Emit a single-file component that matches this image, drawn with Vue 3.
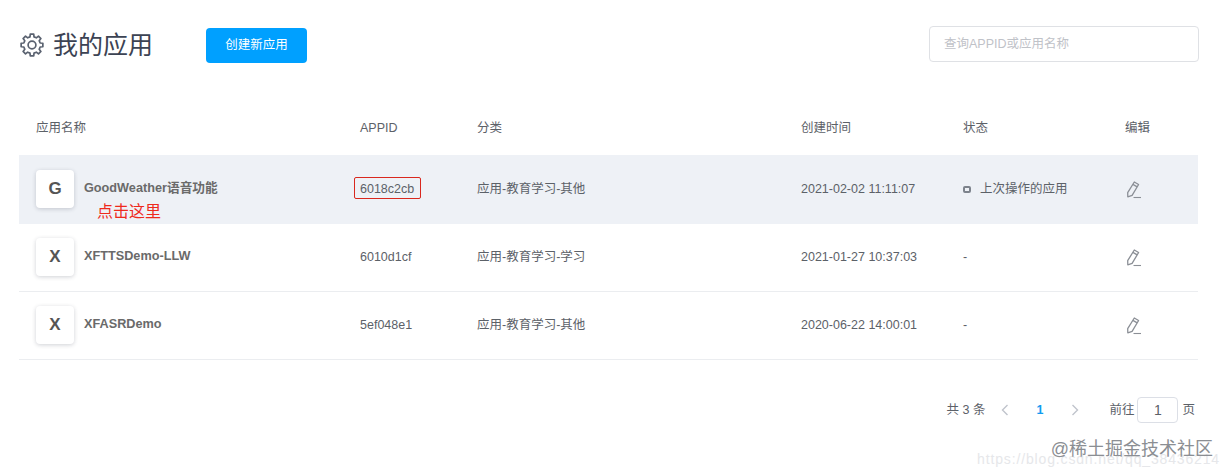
<template>
  <div class="page">
    <header class="head">
      <svg class="gear" viewBox="0 0 24 24" width="24" height="24" fill="none" stroke="#5a6270" stroke-width="1.700" stroke-linejoin="round">
        <path :d="gearPath" />
        <circle cx="12" cy="12" r="3.900" />
      </svg>
      <h1 class="title">我的应用</h1>
      <button class="create">创建新应用</button>
      <div class="search">查询APPID或应用名称</div>
    </header>

    <div class="table">
      <div class="row row-head">
        <div class="first">应用名称</div>
        <div>APPID</div>
        <div>分类</div>
        <div>创建时间</div>
        <div>状态</div>
        <div>编辑</div>
      </div>
      <div v-for="(app, i) in apps" :key="app.id" class="row row-body" :class="{ active: i === 0 }">
        <div class="first name-cell">
          <span class="avatar">{{ app.name[0] }}</span>
          <span class="name">{{ app.name }}</span>
          <span v-if="i === 0" class="note">点击这里</span>
        </div>
        <div class="id-cell">
          {{ app.id }}
          <span v-if="i === 0" class="mark"></span>
        </div>
        <div>{{ app.category }}</div>
        <div>{{ app.time }}</div>
        <div class="status">
          <i v-if="app.last" class="dot"></i>
          {{ app.last ? '上次操作的应用' : '-' }}
        </div>
        <div class="edit">
          <svg viewBox="0 0 18 18" width="18" height="18" fill="none" stroke="#8b8f96" stroke-width="1.300" stroke-linejoin="round">
            <path d="M9.300 1l4.300 2.500-6.500 10.900-4.300 1.500-.1-4.300z" />
            <path d="M7.900 3.400l4.300 2.500" />
            <path d="M8.500 16.500h7.500" stroke-width="1.100" />
          </svg>
        </div>
      </div>
    </div>

    <footer class="pager">
      <span>共 3 条</span>
      <svg class="arrow left" viewBox="0 0 8 12" width="8" height="12" fill="none" stroke="#c0c4cc" stroke-width="1.400"><path d="M6.500 1L1.500 6l5 5" /></svg>
      <b class="current">1</b>
      <svg class="arrow right" viewBox="0 0 8 12" width="8" height="12" fill="none" stroke="#c0c4cc" stroke-width="1.400"><path d="M1.500 1l5 5-5 5" /></svg>
      <span>前往</span>
      <span class="jump">1</span>
      <span>页</span>
    </footer>

    <div class="wm-url">https://blog.csdn.net/qq_38436214</div>
    <div class="wm-site">@稀土掘金技术社区</div>
  </div>
</template>

<script setup>
const apps = [
  { name: 'GoodWeather语音功能', id: '6018c2cb', category: '应用-教育学习-其他', time: '2021-02-02 11:11:07', last: true },
  { name: 'XFTTSDemo-LLW', id: '6010d1cf', category: '应用-教育学习-学习', time: '2021-01-27 10:37:03', last: false },
  { name: 'XFASRDemo', id: '5ef048e1', category: '应用-教育学习-其他', time: '2020-06-22 14:00:01', last: false }
]

// eight teeth round the centre of a 24 box
const point = (r, deg) => {
  const a = (deg - 90) * Math.PI / 180
  return `${(12 + r * Math.cos(a)).toFixed(2)} ${(12 + r * Math.sin(a)).toFixed(2)}`
}
const gearPath = Array.from({ length: 8 }, (_, i) => {
  const c = i * 45
  return `${i ? 'L' : 'M'}${point(8.4, c - 14)}L${point(11, c - 9)}L${point(11, c + 9)}L${point(8.4, c + 14)}`
}).join('') + 'Z'
</script>

<style>
html, body { margin: 0; background: #fff; }
</style>

<style scoped>
.page {
  position: relative;
  width: 1229px;
  height: 476px;
  overflow: hidden;
  font-family: "Liberation Sans", "Noto Sans CJK SC", sans-serif;
  font-size: 12.5px;
  line-height: 18px;
  color: #5c6168;
}

.head {
  display: flex;
  align-items: center;
  height: 70px;
  padding: 20px 30px 0 20px;
  box-sizing: border-box;
}
.gear { flex: none; }
.title {
  margin: 0 0 0 9px;
  width: 153px;
  font-size: 25px;
  line-height: 34px;
  font-weight: 400;
  color: #3c4353;
}
.create {
  width: 101px;
  height: 35px;
  border: 0;
  border-radius: 4px;
  background: #00a0ff;
  color: #fff;
  font: inherit;
}
.search {
  width: 270px;
  height: 36px;
  margin: 0 0 2px auto;
  padding-left: 14px;
  box-sizing: border-box;
  border: 1px solid #dfe1e5;
  border-radius: 4px;
  line-height: 34px;
  color: #bfc2c8;
}

.table { margin: 15px 31px 0 19px; }
.row {
  display: grid;
  grid-template-columns: 341px 117px 324px 162px 162px 1fr;
  align-items: center;
}
.row-head { height: 70px; padding-top: 15px; box-sizing: border-box; }
.row-body {
  height: 68px;
  padding-bottom: 2px;
  border-bottom: 1px solid #ebedf0;
  box-sizing: border-box;
}
.row-body.active {
  height: 69px;
  padding-bottom: 1px;
  background: #eef1f6;
  border-bottom: 0;
}
.first { padding-left: 17px; }

.name-cell { position: relative; display: flex; align-items: center; }
.avatar {
  display: flex;
  align-items: center;
  justify-content: center;
  width: 38px;
  height: 38px;
  margin-right: 10px;
  border-radius: 4px;
  background: #fff;
  box-shadow: 0 1px 4px rgba(40, 50, 70, .22);
  font-size: 17px;
  font-weight: 700;
  color: #555;
}
.name { margin-bottom: 2px; font-size: 12.7px; font-weight: 700; color: #6a6a6a; }
.note {
  position: absolute;
  left: 78px;
  top: 33px;
  font-size: 16px;
  line-height: 18px;
  color: #ee2a1c;
}

.id-cell { position: relative; }
.mark {
  position: absolute;
  left: -6px;
  top: -3px;
  width: 67px;
  height: 22px;
  box-sizing: border-box;
  border: 1px solid #d9281e;
  border-radius: 2px;
}

.status { display: flex; align-items: center; }
.dot {
  width: 8px;
  height: 7px;
  margin-right: 9px;
  box-sizing: border-box;
  border: 2px solid #7d838c;
  border-radius: 2px;
}
.edit svg { display: block; margin-top: 2px; }

.pager {
  display: flex;
  align-items: center;
  justify-content: flex-end;
  height: 26px;
  margin: 37px 34px 0 0;
}
.arrow.left { margin: 0 0 0 15px; }
.current {
  margin: 0 28px;
  color: #129cf0;
  font-weight: 700;
}
.arrow.right { margin-right: 30px; }
.jump {
  width: 41px;
  height: 26px;
  margin: 0 4px 0 3px;
  box-sizing: border-box;
  border: 1px solid #dcdfe6;
  border-radius: 4px;
  text-align: center;
  font-size: 14px;
  line-height: 24px;
}

/* watermarks lie over the page */
.wm-url {
  position: absolute;
  right: 9px;
  top: 450px;
  font-size: 14px;
  letter-spacing: .85px;
  color: #e6e7ea;
}
.wm-site {
  position: absolute;
  right: 16px;
  top: 440px;
  font-size: 18px;
  color: #8b8e93;
}
</style>
